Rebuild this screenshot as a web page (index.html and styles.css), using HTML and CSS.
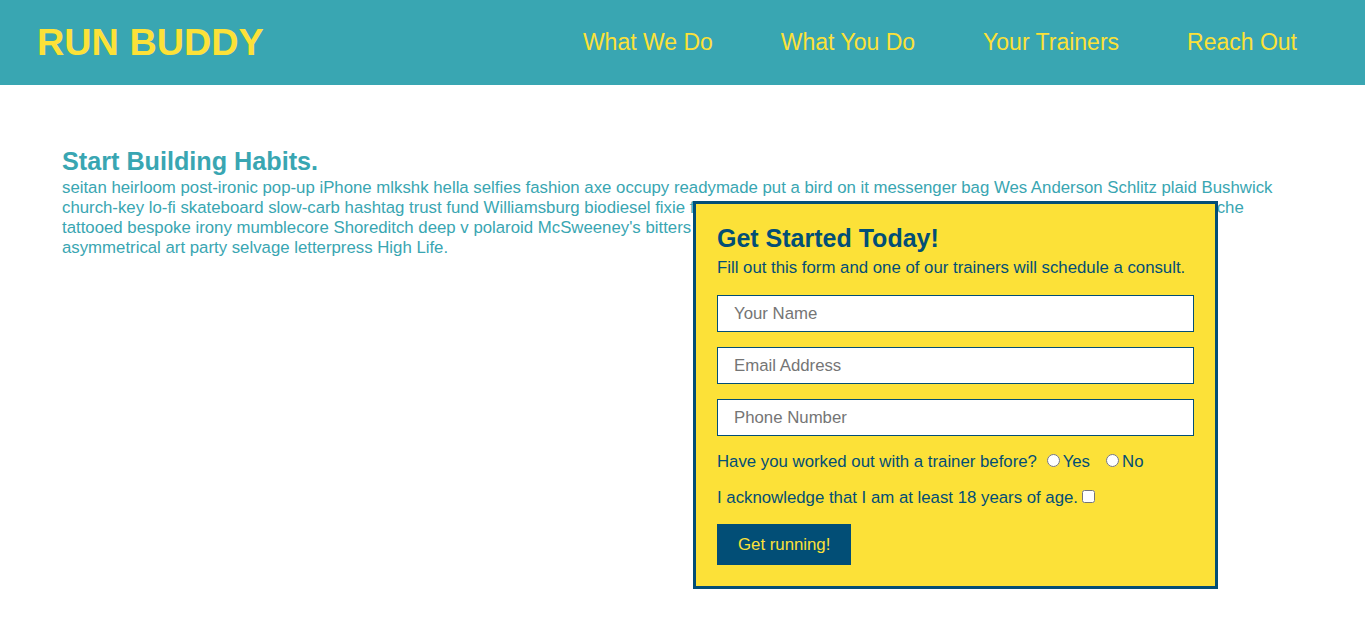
FILE: index.html
```html
<!DOCTYPE html>
<html lang="en">
<head>
<meta charset="utf-8">
<title>Run Buddy</title>
<link rel="stylesheet" href="styles.css">
</head>
<body>
<header class="site-header">
  <h1 class="logo">RUN BUDDY</h1>
  <nav>
    <ul class="nav-list">
      <li><a href="#what-we-do">What We Do</a></li>
      <li><a href="#what-you-do">What You Do</a></li>
      <li><a href="#your-trainers">Your Trainers</a></li>
      <li><a href="#reach-out">Reach Out</a></li>
    </ul>
  </nav>
</header>
<main class="hero">
  <section class="intro">
    <h2 class="intro-title">Start Building Habits.</h2>
    <p class="intro-text">seitan heirloom post-ironic pop-up iPhone mlkshk hella selfies fashion axe occupy readymade put a bird on it messenger bag Wes Anderson Schlitz plaid Bushwick church-key lo-fi skateboard slow-carb hashtag trust fund Williamsburg biodiesel fixie farm-to-table 3 wolf moon VHS Godard chillwave kale chips banh mi cliche tattooed bespoke irony mumblecore Shoreditch deep v polaroid McSweeney's bitters Tumblr fanny packs 8-bit normcore Pinterest Marfa try-hard four loko asymmetrical art party selvage letterpress High Life.</p>
  </section>
  <form class="signup">
    <h3 class="signup-title">Get Started Today!</h3>
    <p class="signup-sub">Fill out this form and one of our trainers will schedule a consult.</p>
    <input class="field" type="text" placeholder="Your Name">
    <input class="field" type="email" placeholder="Email Address">
    <input class="field field-last" type="tel" placeholder="Phone Number">
    <div class="row">Have you worked out with a trainer before? <label class="opt"><input type="radio" name="trained">Yes</label><label class="opt"><input type="radio" name="trained">No</label></div>
    <div class="row row-check">I acknowledge that I am at least 18 years of age.<input type="checkbox"></div>
    <button class="btn" type="button">Get running!</button>
  </form>
</main>
</body>
</html>
```
FILE: styles.css
```css
* { box-sizing: border-box; }
html, body { margin: 0; padding: 0; }
body {
  font-family: "Liberation Sans", Arial, sans-serif;
  background: #fff;
}
.site-header {
  height: 85px;
  background: #39a6b2;
  display: flex;
  align-items: center;
  justify-content: space-between;
  padding: 0 34px;
}
.logo {
  margin: 0 0 0 3px;
  color: #fce138;
  font-size: 37.8px;
  font-weight: bold;
  line-height: 1;
}
.nav-list {
  list-style: none;
  margin: 0;
  padding: 0;
  display: flex;
}
.nav-list li { padding: 0 34px; }
.nav-list a {
  color: #fce138;
  text-decoration: none;
  font-size: 23px;
  line-height: 1;
}
.hero {
  position: relative;
  padding: 62px 63px 0 62px;
  min-height: 552px;
}
.intro-title {
  margin: 0 0 2px;
  color: #39a6b2;
  font-size: 25.2px;
  font-weight: bold;
}
.intro-text {
  margin: 0;
  color: #39a6b2;
  font-size: 16.8px;
}
.signup {
  position: absolute;
  top: 116px;
  left: 693px;
  width: 525px;
  background: #fce138;
  border: 3px solid #024e76;
  padding: 20px 21px 21px;
  color: #024e76;
  display: flex;
  flex-direction: column;
  align-items: flex-start;
}
.signup-title {
  margin: 0;
  font-size: 25px;
  font-weight: bold;
}
.signup-sub {
  margin: 5px 0 17px;
  font-size: 16.8px;
}
.field {
  width: 100%;
  height: 37px;
  border: 1px solid #024e76;
  background: #fff;
  padding: 0 16px;
  font-family: "Liberation Sans", Arial, sans-serif;
  font-size: 16.8px;
  color: #333;
  margin: 0 0 15px;
}
.field::placeholder { color: #757575; }
.field-last { margin-bottom: 15px; }
.row {
  font-size: 16.8px;
  margin-bottom: 15px;
}
.opt { margin-right: 11px; }
.opt input { margin-right: 3px; }
.row-check { margin-bottom: 16px; }
.row-check input { margin-left: 4px; }
.btn {
  background: #024e76;
  color: #fce138;
  border: none;
  font-family: "Liberation Sans", Arial, sans-serif;
  font-size: 16.8px;
  height: 41px;
  padding: 0 21px;
}
```
